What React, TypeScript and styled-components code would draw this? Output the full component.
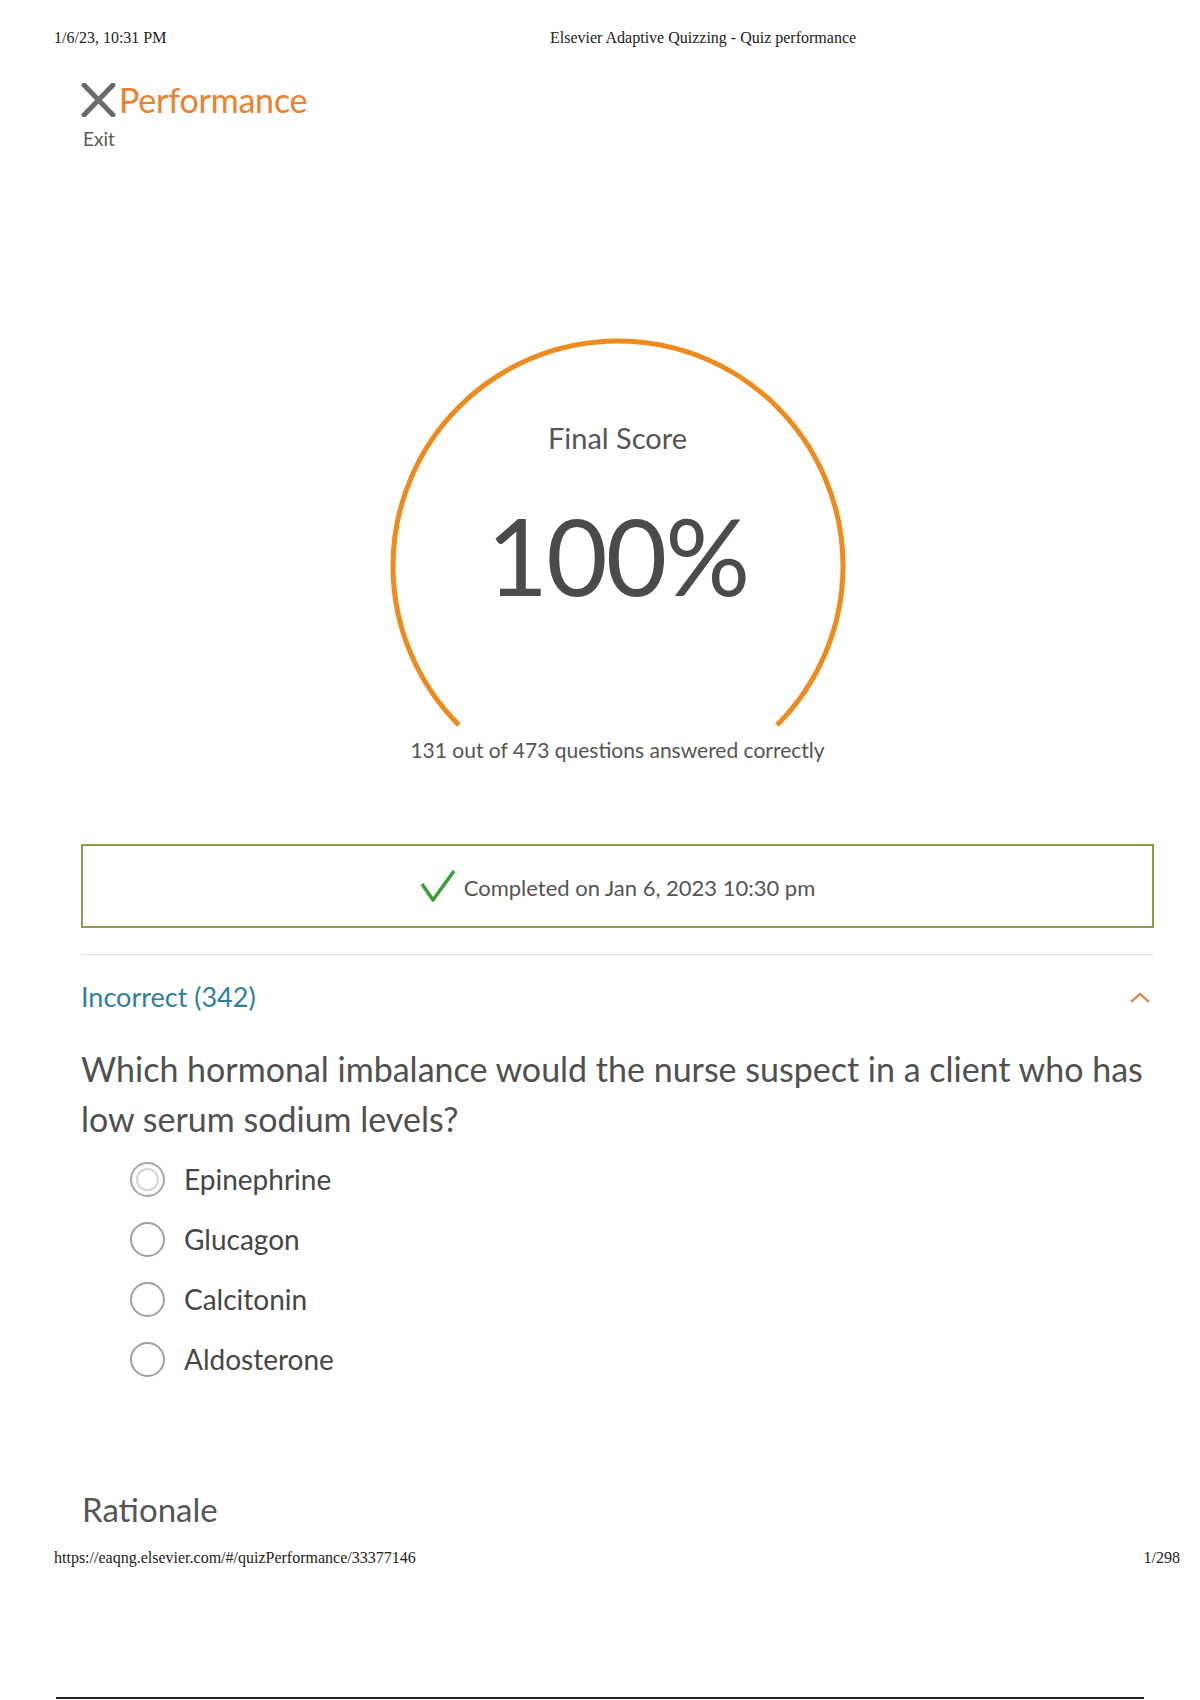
import React from 'react'
import styled, { createGlobalStyle } from 'styled-components'

const GlobalStyle = createGlobalStyle`
  html, body {
    margin: 0;
    padding: 0;
    background: #fff;
  }
  * {
    box-sizing: border-box;
  }
`

const options = ['Epinephrine', 'Glucagon', 'Calcitonin', 'Aldosterone']

const App = () => {
  return (
    <StyledPage>
      <GlobalStyle />
      <PrintHeader>
        <span>1/6/23, 10:31 PM</span>
        <span>Elsevier Adaptive Quizzing - Quiz performance</span>
      </PrintHeader>

      <Main>
        <TopBar>
          <svg width="35" height="34" viewBox="0 0 35 34">
            <path d="M3 2 L32 32 M32 2 L3 32" stroke="#6b6b6b" strokeWidth="5" strokeLinecap="round" fill="none" />
          </svg>
          <PageTitle>Performance</PageTitle>
        </TopBar>
        <ExitLabel>Exit</ExitLabel>

        <Gauge>
          <svg className="arc" width="460" height="400" viewBox="0 0 460 400">
            <path
              d="M 70.9 389.1 A 225 225 0 1 1 389.1 389.1"
              stroke="#ef8a1d"
              strokeWidth="5"
              fill="none"
            />
          </svg>
          <ScoreLabel>Final Score</ScoreLabel>
          <ScoreValue>100%</ScoreValue>
        </Gauge>
        <ScoreStats>131 out of 473 questions answered correctly</ScoreStats>

        <CompletedBox>
          <svg width="36" height="34" viewBox="0 0 36 34">
            <path d="M2 15 L13 31 L34 2" stroke="#3a9d3c" strokeWidth="3.5" strokeLinejoin="round" fill="none" />
          </svg>
          <span>Completed on Jan 6, 2023 10:30 pm</span>
        </CompletedBox>

        <Divider />

        <SectionRow>
          <SectionTitle>Incorrect (342)</SectionTitle>
          <svg width="22" height="12" viewBox="0 0 22 12">
            <path d="M2 10 L11 2 L20 10" stroke="#d98238" strokeWidth="2.2" fill="none" />
          </svg>
        </SectionRow>

        <Question>
          Which hormonal imbalance would the nurse suspect in a client who has low serum sodium levels?
        </Question>

        <OptionList>
          {options.map((opt, i) => (
            <OptionRow key={opt}>
              <Radio $focused={i === 0} />
              <span>{opt}</span>
            </OptionRow>
          ))}
        </OptionList>

        <Rationale>Rationale</Rationale>
      </Main>

      <PrintFooter>
        <span>https://eaqng.elsevier.com/#/quizPerformance/33377146</span>
        <span>1/298</span>
      </PrintFooter>
      <PageBreak />
    </StyledPage>
  )
}

export default App

const StyledPage = styled.div`
  width: 1200px;
  height: 1700px;
  overflow: hidden;
  background: #fff;
  font-family: Lato, 'Open Sans', sans-serif;
  color: #505050;
`

const PrintHeader = styled.div`
  display: grid;
  grid-template-columns: 496px auto;
  padding: 29px 0 0 54px;
  font-family: 'Liberation Serif', serif;
  font-size: 16px;
  line-height: 18px;
  color: #222;
`

const Main = styled.main`
  padding: 0 46px 0 81px;
`

const TopBar = styled.div`
  display: flex;
  align-items: center;
  gap: 3px;
  height: 40px;
  margin-top: 33px;
  svg {
    flex-shrink: 0;
  }
`

const PageTitle = styled.h1`
  margin: 0;
  font-size: 34px;
  font-weight: 400;
  line-height: 40px;
  color: #ea8230;
  letter-spacing: -0.2px;
`

const ExitLabel = styled.div`
  margin-top: 9px;
  padding-left: 2px;
  font-size: 19px;
  line-height: 20px;
  color: #5a5a5a;
`

const Gauge = styled.div`
  position: relative;
  width: 460px;
  height: 402px;
  margin: 187px auto 0;
  padding-top: 86px;
  text-align: center;
  .arc {
    position: absolute;
    left: 0;
    top: 0;
  }
`

const ScoreLabel = styled.div`
  position: relative;
  font-size: 29px;
  line-height: 32px;
  color: #555;
`

const ScoreValue = styled.div`
  position: relative;
  margin-top: 48px;
  font-size: 106px;
  line-height: 106px;
  color: #4b4b4d;
  letter-spacing: -2px;
`

const ScoreStats = styled.div`
  text-align: center;
  font-size: 21px;
  line-height: 24px;
  color: #555;
`

const CompletedBox = styled.div`
  display: flex;
  align-items: center;
  justify-content: center;
  gap: 8px;
  height: 84px;
  margin-top: 82px;
  border: 2px solid #8d9c45;
  font-size: 22px;
  color: #555;
  span {
    padding-top: 2px;
  }
`

const Divider = styled.hr`
  margin: 26px 0 0;
  border: 0;
  border-top: 1px solid #dedede;
`

const SectionRow = styled.div`
  display: flex;
  align-items: center;
  justify-content: space-between;
  height: 40px;
  margin-top: 21px;
  padding-right: 3px;
  svg {
    margin-top: 3px;
  }
`

const SectionTitle = styled.h2`
  margin: 0;
  font-size: 27px;
  font-weight: 400;
  color: #2f7f9c;
`

const Question = styled.p`
  margin: 28px 0 0;
  font-size: 34px;
  line-height: 50px;
  color: #505050;
`

const OptionList = styled.div`
  display: flex;
  flex-direction: column;
  margin-top: 5px;
  padding-left: 49px;
`

const OptionRow = styled.label`
  display: flex;
  align-items: center;
  gap: 19px;
  height: 60px;
  font-size: 28px;
  color: #464646;
`

const Radio = styled.span<{ $focused?: boolean }>`
  width: 35px;
  height: 35px;
  border-radius: 50%;
  border: 2px solid ${(p) => (p.$focused ? '#a8a8a8' : '#a0a0a0')};
  box-shadow: ${(p) => (p.$focused ? 'inset 0 0 0 4px #fff, inset 0 0 0 6px #d4d4d4' : 'none')};
  flex-shrink: 0;
`

const Rationale = styled.h3`
  margin: 100px 0 0;
  padding-left: 1px;
  font-size: 33px;
  font-weight: 400;
  line-height: 40px;
  color: #555;
`

const PrintFooter = styled.div`
  display: flex;
  justify-content: space-between;
  margin-top: 20px;
  padding: 0 20px 0 54px;
  font-family: 'Liberation Serif', serif;
  font-size: 16px;
  line-height: 18px;
  color: #222;
`

const PageBreak = styled.div`
  height: 2px;
  margin: 130px 56px 0;
  background: #222;
`
